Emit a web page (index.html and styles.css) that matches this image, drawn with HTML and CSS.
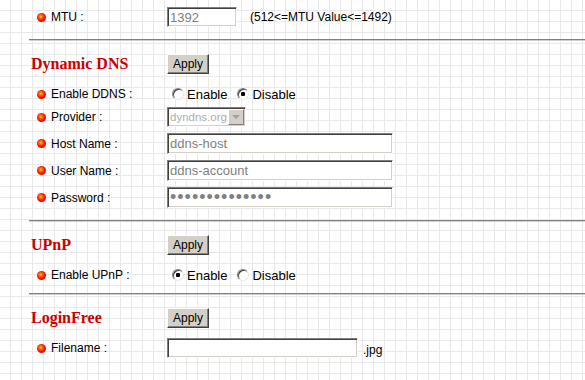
FILE: index.html
```html
<!DOCTYPE html>
<html lang="en">
<head>
    <meta charset="UTF-8">
    <title>DDNS / UPnP / LoginFree</title>
    <link rel="stylesheet" href="styles.css">
</head>
<body>

<div class="page">
    <div class="row r-mtu">
        <div class="label"><span class="dot"></span>MTU :</div>
        <div class="field">
            <input class="txt w-mtu" type="text" value="1392" disabled>
            <span class="hint">(512&lt;=MTU Value&lt;=1492)</span>
        </div>
    </div>

    <hr class="sep">

    <!-- Dynamic DNS -->
    <div class="head">
        <h3 class="title">Dynamic DNS</h3>
        <button class="btn">Apply</button>
    </div>
    <div class="row r-radio">
        <div class="label"><span class="dot"></span>Enable DDNS :</div>
        <div class="field">
            <label class="opt"><input type="radio" name="ddns">Enable</label>
            <label class="opt"><input type="radio" name="ddns" checked>Disable</label>
        </div>
    </div>
    <div class="row r-select">
        <div class="label"><span class="dot"></span>Provider :</div>
        <div class="field">
            <span class="sel">
                <select disabled><option>dyndns.org</option></select>
                <span class="arrow"></span>
            </span>
        </div>
    </div>
    <div class="row r-text">
        <div class="label"><span class="dot"></span>Host Name :</div>
        <div class="field"><input class="txt w-long" type="text" value="ddns-host" disabled></div>
    </div>
    <div class="row r-text">
        <div class="label"><span class="dot"></span>User Name :</div>
        <div class="field"><input class="txt w-long" type="text" value="ddns-account" disabled></div>
    </div>
    <div class="row r-text">
        <div class="label"><span class="dot"></span>Password :</div>
        <div class="field"><input class="txt w-long pwd" type="password" value="ddnspassword12" disabled></div>
    </div>

    <hr class="sep">

    <!-- UPnP -->
    <div class="head">
        <h3 class="title">UPnP</h3>
        <button class="btn">Apply</button>
    </div>
    <div class="row r-radio">
        <div class="label"><span class="dot"></span>Enable UPnP :</div>
        <div class="field">
            <label class="opt"><input type="radio" name="upnp" checked>Enable</label>
            <label class="opt"><input type="radio" name="upnp">Disable</label>
        </div>
    </div>

    <hr class="sep sep-tight">

    <!-- LoginFree -->
    <div class="head">
        <h3 class="title">LoginFree</h3>
        <button class="btn">Apply</button>
    </div>
    <div class="row r-radio">
        <div class="label"><span class="dot"></span>Filename :</div>
        <div class="field">
            <input class="txt w-file" type="text">
            <span class="ext">.jpg</span>
        </div>
    </div>
</div>

</body>
</html>
```

FILE: styles.css
```css
body {
    margin: 0;
    font-family: "Liberation Sans", Arial, sans-serif;
    font-size: 12px;
    color: #000;
    background-color: #fff;
    background-image: linear-gradient(to right, #e9e9e9 1px, transparent 1px),
                      linear-gradient(to bottom, #e9e9e9 1px, transparent 1px);
    background-size: 11px 11px;
    background-position: 10px 10px;
    overflow: hidden;
}

.page { padding: 4px 0 0 29px; }

/* rows: label column + control column */
.row { display: flex; align-items: center; }
.r-mtu { height: 26px; }
.r-radio { height: 20px; }
.r-select { height: 26px; }
.r-text { height: 27px; }

.label { width: 138px; flex: none; box-sizing: border-box; padding-left: 8px; display: flex; align-items: center; gap: 5px; }
.dot { width: 9px; height: 9px; border-radius: 50%; flex: none;
    background: radial-gradient(circle at 42% 40%, #ffd840 0, #ff7000 22%, #ff1000 50%, #c80000 100%); }
.field { display: flex; align-items: center; }

.sep { margin: 9px 0 0 0; height: 0; border: 0; border-top: 1px solid #808080; border-bottom: 1px solid #d0d0d0; }
.sep-tight { margin-top: 8px; }

/* section header */
.head { height: 40px; margin-top: 3px; display: flex; align-items: center; }
.title { width: 138px; flex: none; box-sizing: border-box; margin: 0; padding-left: 2px;
    font: bold 16px "Liberation Serif", "Times New Roman", serif; color: #cc0000; }

.btn { width: 42px; height: 20px; padding: 0; font: 12px "Liberation Sans", Arial, sans-serif; color: #000;
    background: #d4d0c8; border: 1px solid; border-color: #fff #404040 #404040 #fff;
    box-shadow: inset -1px -1px #808080; }

/* classic inset fields */
.txt { box-sizing: border-box; height: 20px; padding: 0 2px; margin: 0;
    font: 13px "Liberation Sans", Arial, sans-serif; color: #808080; background: #fff;
    border: 1px solid; border-color: #808080 #fff #fff #808080;
    box-shadow: inset 1px 1px #404040, inset -1px -1px #d4d0c8; }
.w-mtu { width: 70px; }
.w-long { width: 226px; height: 21px; }
.w-file { width: 191px; }
.pwd { font-size: 18px; letter-spacing: 1px; }

.hint { margin-left: 13px; }
.ext { margin-left: 5px; margin-top: 4px; }

/* radios */
.opt { display: flex; align-items: center; font-size: 13px; margin-left: 10px; }
.opt:first-child { margin-left: 5px; }
.opt input { appearance: none; width: 12px; height: 12px; margin: 0 3px 0 0; border-radius: 50%;
    border: 1px solid; border-color: #808080 #e8e8e8 #e8e8e8 #808080; background: #fff;
    box-shadow: inset 1px 1px #404040; }
.opt input:checked { background: radial-gradient(circle, #000 0, #000 2px, #fff 2.5px); }

/* select */
.sel { position: relative; display: block; width: 79px; height: 20px; box-sizing: border-box;
    border: 1px solid; border-color: #808080 #fff #fff #808080;
    box-shadow: inset 1px 1px #404040, inset -1px -1px #d4d0c8; background: #fff; }
.sel select { appearance: none; border: 0; background: transparent; width: 100%; height: 100%;
    padding: 0 0 0 2px; font: 11.5px "Liberation Sans", Arial, sans-serif; color: #8c8c8c; }
.arrow { position: absolute; right: 1px; top: 1px; width: 14px; height: 14px;
    background: #d4d0c8; border: 1px solid; border-color: #fff #808080 #808080 #fff; }
.arrow::after { content: ""; position: absolute; left: 3px; top: 5px;
    border-left: 4px solid transparent; border-right: 4px solid transparent; border-top: 4px solid #a0a0a0; }
```
